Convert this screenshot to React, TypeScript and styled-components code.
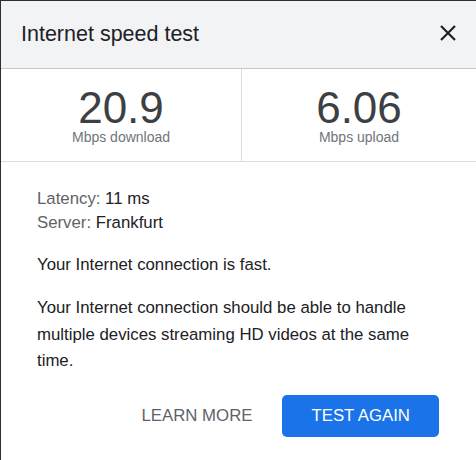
import React from 'react';
import styled, { createGlobalStyle } from 'styled-components';

const GlobalStyle = createGlobalStyle`
  html, body {
    margin: 0;
    padding: 0;
    background: #ffffff;
  }

  body {
    font-family: "Liberation Sans", Arial, sans-serif;
  }
`;

const Dialog = styled.div`
  box-sizing: border-box;
  width: 476px;
  height: 460px;
  border-top: 1px solid #2e2e2e;
  border-left: 1px solid #2e2e2e;
  background: #ffffff;
  display: flex;
  flex-direction: column;
`;

const Header = styled.header`
  height: 67px;
  display: flex;
  align-items: center;
  justify-content: space-between;
  padding: 0 19px 0 20px;
  background-color: #f1f3f4;
  border-bottom: 1px solid #c4c6c8;
`;

const Title = styled.h1`
  margin: 0;
  font-size: 21.5px;
  font-weight: 400;
  color: #202124;
`;

const CloseButton = styled.button`
  display: flex;
  align-items: center;
  justify-content: center;
  width: 18px;
  height: 18px;
  margin-top: -3px;
  padding: 0;
  border: none;
  background: none;
  color: #202124;
  cursor: pointer;
`;

const Stats = styled.section`
  display: grid;
  grid-template-columns: 241px 1fr;
  border-bottom: 1px solid #dadce0;
`;

const Stat = styled.div<{ divider?: boolean }>`
  display: flex;
  flex-direction: column;
  align-items: center;
  padding: 17px 0;
  border-right: ${p => (p.divider ? '1px solid #dadce0' : 'none')};
`;

const StatValue = styled.div`
  font-size: 44px;
  line-height: 44px;
  color: #3c4043;
`;

const StatLabel = styled.div`
  font-size: 14px;
  line-height: 14px;
  color: #70757a;
`;

const Body = styled.section`
  padding: 25px 37px 0 36px;
  font-size: 16.8px;
  color: #202124;
`;

const InfoRow = styled.div`
  line-height: 24px;

  & > span {
    color: #5f6368;
  }
`;

const Paragraph = styled.p`
  margin: 17px 0 0;
  line-height: 26.4px;
`;

const Actions = styled.div`
  display: flex;
  justify-content: flex-end;
  gap: 1px;
  margin-top: 20px;
`;

const ActionButton = styled.button<{ primary?: boolean }>`
  height: 42px;
  padding: 0 29px;
  border: none;
  border-radius: 5px;
  font-family: "Liberation Sans", Arial, sans-serif;
  font-size: 16.8px;
  text-transform: uppercase;
  cursor: pointer;
  background-color: ${p => (p.primary ? '#1a73e8' : 'transparent')};
  color: ${p => (p.primary ? '#ffffff' : '#5f6368')};
`;

const CloseIcon = () => (
  <svg width="16" height="16" viewBox="0 0 16 16" aria-hidden="true">
    <path d="M1 1 L15 15 M15 1 L1 15" stroke="currentColor" strokeWidth="2.2" fill="none" />
  </svg>
);

const App = (): React.ReactElement => (
  <>
    <GlobalStyle />
    <Dialog>
      <Header>
        <Title>Internet speed test</Title>
        <CloseButton aria-label="Close">
          <CloseIcon />
        </CloseButton>
      </Header>
      <Stats>
        <Stat divider>
          <StatValue>20.9</StatValue>
          <StatLabel>Mbps download</StatLabel>
        </Stat>
        <Stat>
          <StatValue>6.06</StatValue>
          <StatLabel>Mbps upload</StatLabel>
        </Stat>
      </Stats>
      <Body>
        <InfoRow><span>Latency:</span> 11 ms</InfoRow>
        <InfoRow><span>Server:</span> Frankfurt</InfoRow>
        <Paragraph>Your Internet connection is fast.</Paragraph>
        <Paragraph>
          Your Internet connection should be able to handle multiple devices streaming HD videos at the same time.
        </Paragraph>
        <Actions>
          <ActionButton>Learn more</ActionButton>
          <ActionButton primary>Test again</ActionButton>
        </Actions>
      </Body>
    </Dialog>
  </>
);

export default App;
